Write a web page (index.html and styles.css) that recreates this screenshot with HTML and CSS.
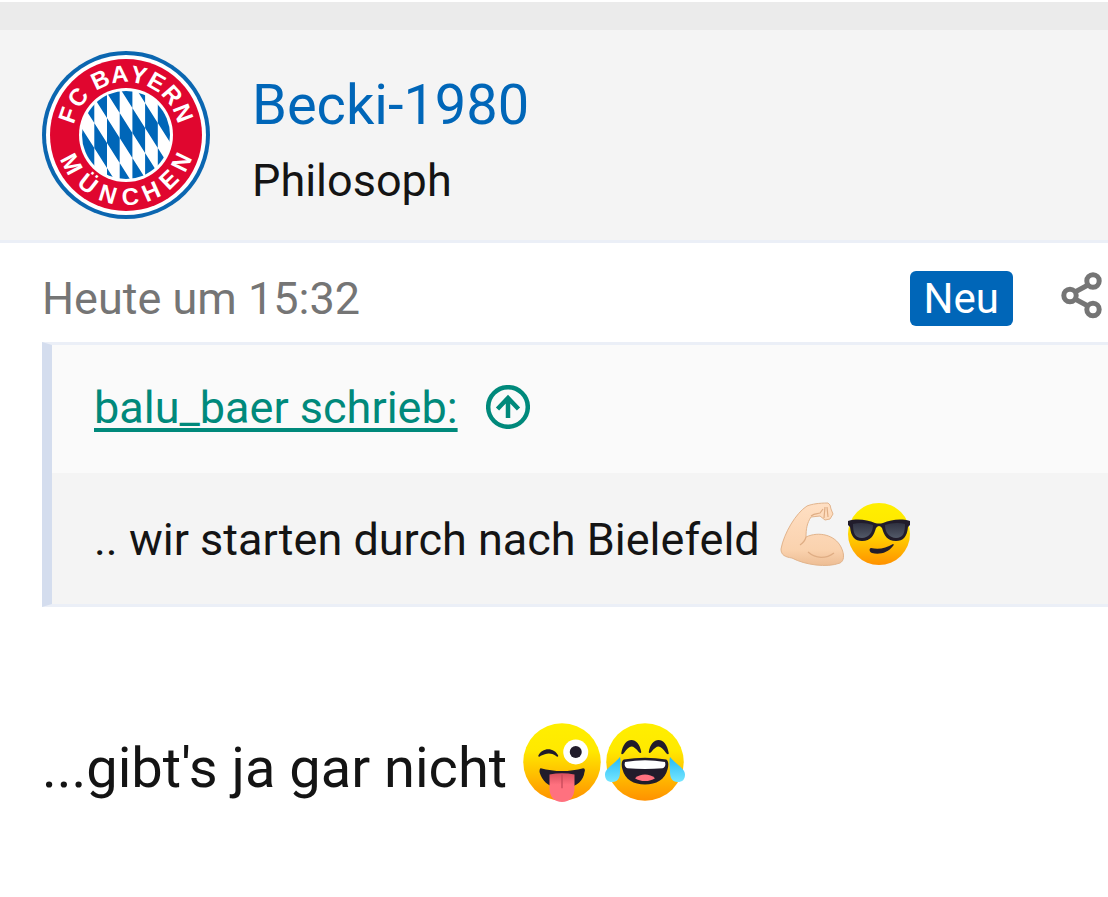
FILE: index.html
```
<!DOCTYPE html>
<html lang="de">
<head>
<meta charset="utf-8">
<meta name="viewport" content="width=device-width, initial-scale=1">
<title>Becki-1980</title>
<link rel="stylesheet" href="styles.css">
</head>
<body>
<div class="divider"></div>
<article class="post">
  <header class="author">
    <svg class="avatar" viewBox="0 0 168 168" role="img" aria-label="FC Bayern München">
      <defs>
        <clipPath id="core"><circle cx="84" cy="84" r="44"/></clipPath>
        <path id="raute" d="M0 -50l12.700 20v25l-12.700 -20zM0 0l12.700 20v25l-12.700 -20zM0 50l12.700 20v25l-12.700 -20z"/>
      </defs>
      <circle cx="84" cy="84" r="84" fill="#0b66b0"/>
      <circle cx="84" cy="84" r="80" fill="#fff"/>
      <circle cx="84" cy="84" r="76" fill="#e0062f"/>
      <circle cx="84" cy="84" r="47" fill="#fff"/>
      <g clip-path="url(#core)" fill="#0066b8">
        <use href="#raute" x="39.600" y="77"/><use href="#raute" x="52.300" y="72"/><use href="#raute" x="65" y="67"/><use href="#raute" x="77.700" y="62"/><use href="#raute" x="90.400" y="57"/><use href="#raute" x="103.100" y="52"/><use href="#raute" x="115.800" y="47"/>
      </g>
      <g class="crest-text" transform="translate(84 84)">
        <text y="-53" transform="rotate(-71)">F</text><text y="-53" transform="rotate(-52)">C</text>
        <text y="-53" transform="rotate(-25)">B</text><text y="-53" transform="rotate(-6)">A</text><text y="-53" transform="rotate(12)">Y</text><text y="-53" transform="rotate(30)">E</text><text y="-53" transform="rotate(49)">R</text><text y="-53" transform="rotate(69)">N</text>
        <text y="70" transform="rotate(62)">M</text><text y="70" transform="rotate(38)">Ü</text><text y="70" transform="rotate(17)">N</text><text y="70" transform="rotate(-4)">C</text><text y="70" transform="rotate(-24)">H</text><text y="70" transform="rotate(-44)">E</text><text y="70" transform="rotate(-64)">N</text>
      </g>
    </svg>
    <div class="identity">
      <a class="name" href="#profil">Becki-1980</a>
      <span class="rank">Philosoph</span>
    </div>
  </header>
  <div class="content">
    <div class="meta">
      <time>Heute um 15:32</time>
      <span class="badge">Neu</span>
      <button class="share" type="button" aria-label="Teilen">
        <svg viewBox="0 0 41 47" fill="none" stroke="#757575" stroke-width="5"><path d="M14 20l13-7M14 27l13 7"/><circle cx="9" cy="23.500" r="6.200"/><circle cx="32" cy="9" r="6.200"/><circle cx="32" cy="37.500" r="6.200"/></svg>
      </button>
    </div>
    <blockquote class="quote">
      <div class="quote-head">
        <a href="#zitat">balu_baer schrieb:</a>
        <svg class="jump" viewBox="0 0 44 44" fill="none" stroke="#00897b" stroke-width="4.500"><circle cx="22" cy="22" r="19.800"/><path d="M22 33V13M11.500 24L22 13l10.500 11"/></svg>
      </div>
      <p class="quote-body">.. wir starten durch nach Bielefeld
        <span class="emojis"><svg class="emoji" viewBox="0 0 64 64" role="img" aria-label="Angespannter Bizeps">
          <defs><linearGradient id="skin" x2="0" y2="1"><stop stop-color="#ffdfc3"/><stop offset=".75" stop-color="#fad2ae"/><stop offset="1" stop-color="#edbd94"/></linearGradient></defs>
          <path fill="url(#skin)" stroke="#e2b48c" d="M1 47C4 31 16 11 27 4c5-2 12-3 21-3l2 2 1 4 2 5-3 5-5 1-5-4-9 1c-4 6-5 12-5 20 13-6 29-2 35 10 4 8 3 14-1 16-13 5-35 2-48-5-7-1-11-3-11-9z"/>
          <path fill="none" stroke="#dfad84" stroke-width="1.200" d="M31 14c4-3 6-2 9-3l3-4M44 16l1-11M48 15l-1-10M26 35c-1 4-3 6-6 8M28 50c8 7 18 7 26 1"/>
        </svg><svg class="emoji" viewBox="0 0 64 64" role="img" aria-label="Sonnenbrille">
          <defs><linearGradient id="face" x2="0" y2="1"><stop stop-color="#ffef00"/><stop offset=".35" stop-color="#ffe900"/><stop offset="1" stop-color="#ff9100"/></linearGradient><linearGradient id="lens" x2="0" y2="1"><stop stop-color="#303241"/><stop offset="1" stop-color="#525968"/></linearGradient></defs>
          <circle cx="32" cy="32" r="31" fill="url(#face)"/>
          <path fill="#211c2b" d="M1 19c10-3 19-1 27 2q4 1 8 0c8-3 17-5 27-2v4l-2 2c-1 10-5 14-12 14-9 0-12-6-14-13q-3-4-6 0c-2 7-5 13-14 13C8 39 4 35 3 25l-2-2z"/>
          <path fill="url(#lens)" d="M6 22c7-2 14-1 20 1 0 8-5 13-11 13-7 0-9-5-9-14zM58 22c-7-2-14-1-20 1 0 8 5 13 11 13 7 0 9-5 9-14z"/>
          <path fill="#211c2b" d="M24 46c8 2 15 0 22-4 1 0 1 1 0 2-5 7-14 9-21 7-3-1-3-5-1-5z"/>
        </svg></span></p>
    </blockquote>
    <p class="message">...gibt's ja gar nicht
      <span class="emojis"><svg class="emoji" viewBox="0 0 64 64" role="img" aria-label="Zwinkern mit Zunge">
        <defs><linearGradient id="tongue" x2="0" y2="1"><stop stop-color="#d9505f"/><stop offset=".4" stop-color="#ff717f"/></linearGradient></defs>
        <circle cx="32" cy="32" r="31" fill="url(#face)"/>
        <circle cx="43" cy="24" r="10" fill="#fff"/><circle cx="43" cy="24" r="4.800" fill="#211c2b"/>
        <path fill="#211c2b" d="M13 27c3-7 13-7 16 0 0 1-1 1-2 0-4-3-8-2-12 0-1 1-2 1-2 0zM15 37c11 3 23 3 34 0q2 0 1 3c-1 7-6 12-14 12h-8c-7 0-12-5-14-12q0-3 1-3z"/>
        <path fill="url(#tongue)" d="M22 42q10-2 20 0v11c0 7-4 11-10 11s-10-4-10-11z"/><path stroke="#c44959" d="M32 42v11"/>
      </svg><svg class="emoji" viewBox="0 0 64 64" role="img" aria-label="Freudentränen">
        <defs><linearGradient id="tear" x2="0" y2="1"><stop stop-color="#26b9f5"/><stop offset="1" stop-color="#76e6ff"/></linearGradient></defs>
        <circle cx="32" cy="32" r="31" fill="url(#face)"/>
        <path fill="#211c2b" d="M13 25c2-14 14-14 16-1 0 1-1 1-2 0-5-6-7-6-12 1-1 1-2 1-2 0zM35 24c2-13 14-13 16 1 0 1-1 1-2 0-5-7-7-7-12-1-1 1-2 1-2 0z"/>
        <path fill="#211c2b" d="M15 30q17-3 34 0c2 1 2 5 1 8-2 8-9 12-18 12s-16-4-18-12c-1-3-1-7 1-8z"/>
        <path fill="#fff" d="M16 32q16-3 32 0 1 4-2 5-14 1-28 0-3-1-2-5z"/>
        <path fill="#ff717f" d="M24 45c4-4 12-4 16 0-4 3-12 3-16 0z"/>
        <path fill="url(#tear)" d="M12 28c1 4 0 8 0 12 0 5-2 8-6 8s-6-2-6-6c0-5 7-8 12-14zM52 28c-1 4 0 8 0 12 0 5 2 8 6 8s6-2 6-6c0-5-7-8-12-14z"/>
      </svg></span></p>
  </div>
</article>
</body>
</html>
```

FILE: styles.css
```
* { box-sizing: border-box; }
body { margin: 0; padding-top: 2px; background: #fff; color: #141414; font-family: Roboto, sans-serif; overflow-x: hidden; }
p, blockquote { margin: 0; }
.divider { height: 28px; background: #ebebeb; }
.author { display: flex; align-items: center; gap: 42px; padding: 21px 42px; background: #f4f4f4; border-bottom: 3px solid #ebeff7; }
.avatar { width: 168px; height: 168px; flex: none; }
.crest-text { fill: #fff; font: bold 24px "Liberation Sans", sans-serif; text-anchor: middle; }
.identity { display: flex; flex-direction: column; gap: 12px; padding-top: 12px; }
.name { color: #0066b8; font-size: 56px; line-height: 68px; text-decoration: none; }
.rank { font-size: 45px; line-height: 60px; }
.content { padding-left: 42px; }
.meta { display: flex; align-items: center; height: 99px; padding: 12px 6px 0 0; }
.meta time { flex: 1; color: #757575; font-size: 45px; }
.badge { padding: 0 14px; border-radius: 6px; background: #0066b8; color: #fff; font-size: 42px; line-height: 55px; }
.share { margin-left: 48px; padding: 0 0 6px; border: 0; background: none; }
.share svg { display: block; width: 41px; height: 47px; }
.quote { border: solid #ebeff7; border-width: 3px 0 3px 10px; border-left-color: #d4ddee; }
.quote-head { display: flex; align-items: center; gap: 28px; height: 128px; padding: 0 42px 4px; background: #fafafa; }
.quote-head a { color: #00897b; font-size: 45px; text-decoration-thickness: 4px; text-underline-offset: 5px; }
.jump { width: 44px; height: 44px; }
.quote-body { display: flex; align-items: center; gap: 20px; min-height: 131px; padding: 2px 42px 0; background: #f4f4f4; font-size: 45px; }
.emojis { display: flex; gap: 3px; padding-bottom: 12px; }
.emoji { width: 64px; height: 64px; overflow: visible; }
.message { display: flex; align-items: center; gap: 15px; padding: 113px 0; font-size: 56px; line-height: 96px; }
.message .emoji { width: 80px; height: 80px; }
```
